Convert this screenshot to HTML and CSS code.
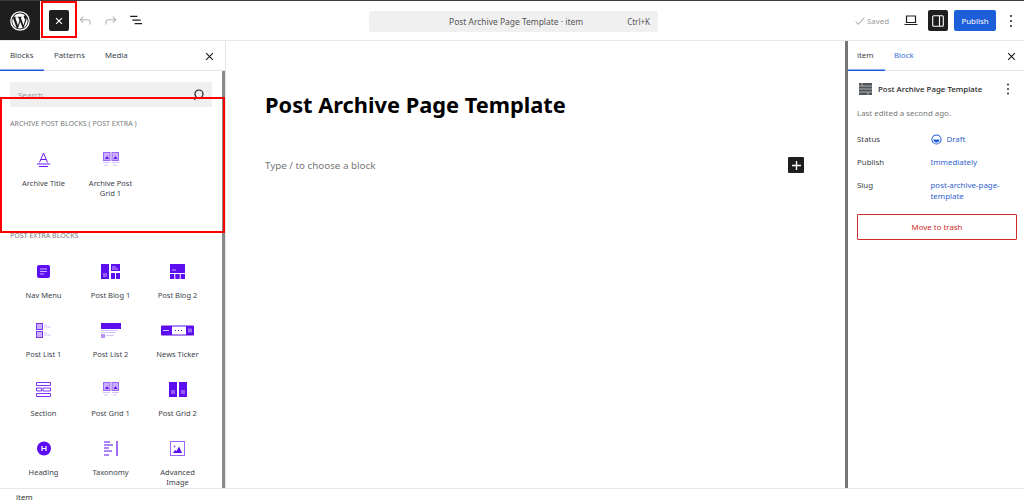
FILE: index.html
```html
<!DOCTYPE html>
<html lang="en">
<head>
<meta charset="utf-8">
<title>Post Archive Page Template</title>
<link rel="stylesheet" href="styles.css">
</head>
<body>
<div class="app">
  <header class="topbar">
    <div class="wp"><svg viewBox="0 0 24 24" width="22" height="22"><circle cx="12" cy="12" r="10" fill="none" stroke="#fff" stroke-width="1.4"/><path fill="#fff" d="M3.600 12a8.400 8.400 0 0 0 4.700 7.500L4.300 8.600A8.400 8.400 0 0 0 3.600 12zm14-.4c0-1-.4-1.800-.7-2.300-.4-.7-.8-1.200-.8-1.900 0-.7.600-1.400 1.400-1.400h.1A8.400 8.400 0 0 0 5 7.400h.5c.9 0 2.200-.1 2.200-.1.400 0 .5.600 0 .7 0 0-.4 0-.9.100l2.900 8.600 1.700-5.200-1.200-3.400c-.4 0-.8-.1-.8-.1-.4 0-.4-.7.100-.7 0 0 1.300.1 2.100.1.900 0 2.200-.1 2.200-.1.400 0 .5.600 0 .7 0 0-.4 0-.9.100l2.900 8.500.8-2.600c.3-1.100.6-1.900.6-2.500zM12.200 12.800l-2.400 7a8.400 8.400 0 0 0 5.200-.1l-.1-.1zm6.900-4.500c0 .3.100.6.100.9 0 .9-.2 1.900-.7 3.100l-2.600 7.400a8.400 8.400 0 0 0 3.200-11.400z"/></svg></div>
    <div class="tools">
      <button class="toggle"><svg viewBox="0 0 12 12" width="10" height="10"><path d="M2.500 2.500l7 7M9.500 2.500l-7 7" stroke="#fff" stroke-width="1.400"/></svg></button>
      <svg class="tool" viewBox="0 0 16 14" width="14" height="12"><path d="M6 2L2.500 5.500 6 9M3 5.500h7.500a3.500 3.500 0 0 1 3.500 3.500v2" fill="none" stroke="#b4b4b4" stroke-width="1.300"/></svg>
      <svg class="tool" viewBox="0 0 16 14" width="14" height="12"><path d="M10 2l3.500 3.500L10 9M13 5.500H5.500A3.500 3.500 0 0 0 2 9v2" fill="none" stroke="#b4b4b4" stroke-width="1.300"/></svg>
      <svg class="tool" viewBox="0 0 14 12" width="13" height="11"><path d="M0 1.500h8M2.500 5.500h9M5 9.500h8" stroke="#1e1e1e" stroke-width="1.400"/></svg>
    </div>
    <div class="command">
      <span class="command-title">Post Archive Page Template · item</span>
      <span class="command-key">Ctrl+K</span>
    </div>
    <div class="actions">
      <span class="saved"><svg viewBox="0 0 12 12" width="10" height="10"><path d="M1 6.500l3 3.500 7-8" fill="none" stroke="#8c8f94" stroke-width="1.100"/></svg>Saved</span>
      <svg class="laptop" viewBox="0 0 14 11" width="14" height="11"><path d="M2.500 1h9v6.500h-9zM.5 9.500h13" fill="none" stroke="#1e1e1e" stroke-width="1.200"/></svg>
      <button class="panel-toggle"><svg viewBox="0 0 12 12" width="12" height="12"><rect x=".7" y=".7" width="10.600" height="10.600" rx="1" fill="none" stroke="#fff" stroke-width="1.100"/><path d="M7.500 1v10" stroke="#fff" stroke-width="1.100"/></svg></button>
      <button class="publish">Publish</button>
      <svg class="dots" viewBox="0 0 4 14" width="4" height="14"><circle cx="2" cy="2" r="1" fill="#1e1e1e"/><circle cx="2" cy="7" r="1" fill="#1e1e1e"/><circle cx="2" cy="12" r="1" fill="#1e1e1e"/></svg>
    </div>
  </header>
  <div class="main">
    <aside class="inserter">
      <div class="tabs">
        <span class="tab active">Blocks</span>
        <span class="tab">Patterns</span>
        <span class="tab">Media</span>
        <svg class="close" viewBox="0 0 12 12" width="9" height="9"><path d="M1.500 1.500l9 9M10.500 1.500l-9 9" stroke="#1e1e1e" stroke-width="1.500"/></svg>
      </div>
      <div class="inserter-body">
        <div class="search"><span>Search</span><svg viewBox="0 0 12 12" width="12" height="12"><circle cx="6" cy="5" r="4" fill="none" stroke="#1e1e1e" stroke-width="1.200"/><path d="M3 8.500L1.500 11" stroke="#1e1e1e" stroke-width="1.200"/></svg></div>
        <h2 class="group-title first">ARCHIVE POST BLOCKS ( POST EXTRA )</h2>
        <div class="blocks featured">
          <div class="block"><svg viewBox="0 0 15 15" width="15" height="15"><path d="M3.500 10.500L7.500 1l4 9.500M5 7.500h5M1 12h13M3 14.500h9" fill="none" stroke="#6a17f5" stroke-width="1"/></svg><span>Archive Title</span></div>
          <div class="block"><svg viewBox="0 0 16 15" width="16" height="15"><use href="#grid1"/></svg><span>Archive Post<br>Grid 1</span></div>
        </div>
        <h2 class="group-title">POST EXTRA BLOCKS</h2>
        <div class="blocks">
          <div class="block"><svg viewBox="0 0 13 13" width="13" height="13"><rect width="13" height="13" rx="2" fill="#5c0ef0"/><path d="M3 4h7M3 6.500h7M3 9h4" stroke="#c9aefb" stroke-width="1"/></svg><span>Nav Menu</span></div>
          <div class="block"><svg viewBox="0 0 19 15" width="19" height="15"><path fill="#5c0ef0" d="M0 0h8v15H0zM10 0h9v7h-9zM10 9h4v6h-4zM15 9h4v6h-4z"/><path stroke="#c9aefb" d="M2 10h4M2 12h4M11 3h4M11 5h6"/></svg><span>Post Blog 1</span></div>
          <div class="block"><svg viewBox="0 0 15 15" width="15" height="15"><path fill="#5c0ef0" d="M0 0h15v9H0zM0 10h4.300v5H0zM5.300 10h4.400v5H5.300zM10.700 10H15v5h-4.300z"/><path stroke="#c9aefb" d="M2 6h4"/></svg><span>Post Blog 2</span></div>
          <div class="block"><svg viewBox="0 0 16 15" width="16" height="15"><rect x=".5" y=".5" width="6" height="6" fill="#c9aefb" stroke="#7a35f5"/><rect x=".5" y="8.500" width="6" height="6" fill="#c9aefb" stroke="#7a35f5"/><path stroke="#d8c4fc" stroke-width="1.200" d="M8 2h3M8 4h7M8 10h3M8 12h7"/></svg><span>Post List 1</span></div>
          <div class="block"><svg viewBox="0 0 20 15" width="20" height="15"><path fill="#5c0ef0" d="M0 0h20v6H0z"/><path stroke="#d8c4fc" stroke-width="1.200" d="M0 7.500h17M0 9.500h15"/><rect y="11" width="4" height="4" fill="#b794f9"/><path stroke="#d8c4fc" d="M5 12.500h8"/></svg><span>Post List 2</span></div>
          <div class="block"><svg viewBox="0 0 33 10" width="33" height="10"><rect width="33" height="10" rx="1" fill="#5c0ef0"/><rect x="11" y="1" width="14" height="8" fill="#fff"/><path stroke="#5c0ef0" stroke-dasharray="1 2" d="M14 5h8"/><path stroke="#d8c4fc" d="M2 5h6M28 3v4M30 3v4"/></svg><span>News Ticker</span></div>
          <div class="block"><svg viewBox="0 0 15 15" width="15" height="15"><path fill="none" stroke="#7a35f5" d="M.5.500h14v3H.5zM.5 6h5v3h-5zM7 6h7.500v3H7zM.5 11.500h14v3H.5z"/></svg><span>Section</span></div>
          <div class="block"><svg viewBox="0 0 16 15" width="16" height="15"><use href="#grid1"/></svg><span>Post Grid 1</span></div>
          <div class="block"><svg viewBox="0 0 18 15" width="18" height="15"><path fill="#5c0ef0" d="M0 0h8v15H0zM10 0h8v15h-8z"/><path stroke="#c9aefb" d="M2 9h4M2 11h4M12 9h4M12 11h4"/></svg><span>Post Grid 2</span></div>
          <div class="block"><svg viewBox="0 0 14 14" width="14" height="14"><circle cx="7" cy="7" r="7" fill="#5c0ef0"/><path d="M5 4.500v5M9 4.500v5M5 7h4" stroke="#fff" stroke-width="1.200"/></svg><span>Heading</span></div>
          <div class="block"><svg viewBox="0 0 14 15" width="14" height="15"><path stroke="#5c0ef0" stroke-width="1.200" d="M0 1h6M0 4h9M0 7h5M0 10h8M0 14h5M13 0v15"/></svg><span>Taxonomy</span></div>
          <div class="block"><svg viewBox="0 0 15 15" width="15" height="15"><rect x=".5" y=".5" width="14" height="14" fill="none" stroke="#9a66f7"/><path fill="#5c0ef0" d="M3 12l2-3 1.500 1L9 5.500l3 6.500z"/><circle cx="4.500" cy="5.500" r="1" fill="#9a66f7"/></svg><span>Advanced<br>Image</span></div>
        </div>
      </div>
    </aside>
    <main class="editor">
      <h1 class="post-title">Post Archive Page Template</h1>
      <div class="appender">
        <span>Type / to choose a block</span>
        <span class="plus"><svg viewBox="0 0 10 10" width="9" height="9"><path d="M5 0v10M0 5h10" stroke="#fff" stroke-width="1.500"/></svg></span>
      </div>
    </main>
    <aside class="sidebar">
      <div class="tabs side-tabs">
        <span class="tab active side-tab">item</span>
        <span class="tab block-tab">Block</span>
        <svg class="close" viewBox="0 0 12 12" width="9" height="9"><path d="M1.500 1.500l9 9M10.500 1.500l-9 9" stroke="#1e1e1e" stroke-width="1.500"/></svg>
      </div>
      <div class="side-body">
        <div class="doc-head">
          <svg viewBox="0 0 13 12" width="13" height="12"><path fill="#50555a" d="M0 0h13v12H0z"/><path stroke="#d8d8d8" stroke-width=".7" d="M0 3h13M0 6h13M0 9h13M3 0v3M9 9v3"/></svg>
          <strong>Post Archive Page Template</strong>
          <svg class="side-dots" viewBox="0 0 4 12" width="4" height="12"><circle cx="2" cy="1.500" r=".9" fill="#1e1e1e"/><circle cx="2" cy="6" r=".9" fill="#1e1e1e"/><circle cx="2" cy="10.500" r=".9" fill="#1e1e1e"/></svg>
        </div>
        <p class="edited">Last edited a second ago.</p>
        <dl class="meta">
          <dt>Status</dt>
          <dd class="status"><svg viewBox="0 0 12 12" width="11" height="11"><circle cx="6" cy="6" r="5" fill="none" stroke="#1d5fd8" stroke-width="1.100"/><path d="M2.800 6a3.200 3.200 0 0 0 6.400 0z" fill="#1d5fd8"/></svg>Draft</dd>
          <dt>Publish</dt>
          <dd>Immediately</dd>
          <dt>Slug</dt>
          <dd>post-archive-page-template</dd>
        </dl>
        <button class="trash">Move to trash</button>
      </div>
    </aside>
  </div>
  <footer class="breadcrumb">item</footer>
  <div class="mark mark-toggle"></div>
  <div class="mark mark-blocks"></div>
</div>
<svg class="defs" width="0" height="0"><defs><g id="grid1"><rect x=".5" y=".5" width="6.500" height="8" fill="#c9aefb" stroke="#9a66f7"/><rect x="9" y=".5" width="6.500" height="8" fill="#c9aefb" stroke="#9a66f7"/><path fill="#5c0ef0" d="M2 7l2-3 2 3zM10.500 7l2-3 2 3z"/><path stroke="#d8c4fc" stroke-width="1.200" d="M0 10.500h7M9 10.500h7M1 13h4M10 13h4"/></g></defs></svg>
</body>
</html>
```
FILE: styles.css
```css
* { box-sizing: border-box; }
html, body { margin: 0; height: 100%; }
body { font-family: "Noto Sans", "Open Sans", sans-serif; font-size: 7.900px; color: #3c434a; background: #fff; overflow: hidden; }
.app { position: relative; display: flex; flex-direction: column; height: 504px; border-top: 1px solid #3a3a3a; }
.defs { position: absolute; }
button { font: inherit; border: 0; padding: 0; }

.topbar { display: flex; align-items: center; height: 40px; flex: none; border-bottom: 1px solid #e8e8e8; }
.wp { width: 40px; height: 39px; background: #1e1e1e; display: flex; align-items: center; justify-content: center; }
.tools { display: flex; align-items: center; margin-left: 9px; }
.toggle { width: 20px; height: 21px; background: #1e1e1e; border-radius: 2px; display: flex; align-items: center; justify-content: center; }
.tool { margin-left: 12px; }
.tool:nth-child(2) { margin-left: 9px; }
.command { position: absolute; left: 369px; top: 10px; width: 289px; height: 21px; background: #f0f0f0; border-radius: 2px; display: flex; align-items: center; padding-right: 8px; color: #555; }
.command-title { flex: 1; text-align: center; padding-left: 36px; white-space: nowrap; font-size: 8.450px; }
.command-key { font-size: 8px; }
.actions { display: flex; align-items: center; margin-left: auto; padding-right: 11px; }
.saved { display: flex; align-items: center; gap: 2px; color: #9a9a9a; margin-right: 15px; }
.panel-toggle { width: 20px; height: 21px; margin-left: 10px; background: #1e1e1e; border-radius: 2px; display: flex; align-items: center; justify-content: center; }
.publish { width: 42px; height: 21px; margin-left: 6px; background: #1d5fd8; color: #fff; border-radius: 2px; }
.dots { margin-left: 13px; }

.main { display: flex; flex: 1; min-height: 0; }
.inserter { width: 225px; flex: none; display: flex; flex-direction: column; border-right: 3px solid #8a8a8a; box-shadow: 1px 0 0 #e4e4e4; }
.tabs { display: flex; align-items: stretch; height: 30px; flex: none; border-bottom: 1px solid #e4e4e4; position: relative; font-size: 7.800px; color: #3c434a; margin-right: -3px; background: #fff; }
.tab { display: flex; align-items: center; padding: 0 10px 2px; margin-bottom: -1px; }
.tab.active { box-shadow: inset 0 -1.500px 0 #1d5fd8; width: 44px; }
.close { position: absolute; right: 11px; top: 11px; }
.inserter-body { flex: 1; overflow: hidden; padding: 11px 10px 0; }
.search { height: 25px; background: #f0f0f0; display: flex; align-items: center; justify-content: space-between; padding: 0 7px 0 8px; color: #9a9a9a; }
.group-title { margin: 10px 0 0; font-size: 7.050px; font-weight: 400; color: #777; line-height: 12px; }
.blocks { display: grid; grid-template-columns: 67px 67px 67px; grid-auto-rows: 59px; margin: 19px 0 0; }
.blocks.featured { height: 81px; }
.featured + .group-title { margin-top: 0; }
.block { display: flex; flex-direction: column; align-items: center; padding-top: 4px; text-align: center; line-height: 10px; font-size: 7.500px; color: #3c434a; }
.block svg { height: 15px; flex: none; margin-bottom: 11px; }

.editor { flex: 1; min-width: 0; padding: 49px 41px 0 40px; }
.post-title { margin: 0; font-size: 21.800px; line-height: 30px; font-weight: 700; color: #000; }
.appender { display: flex; align-items: center; justify-content: space-between; margin-top: 37px; font-size: 9.800px; color: #777; }
.plus { width: 16px; height: 16px; background: #1e1e1e; border-radius: 1px; display: flex; align-items: center; justify-content: center; }

.sidebar { width: 179px; flex: none; border-left: 3px solid #777; display: flex; flex-direction: column; }
.side-tabs { margin-right: 0; }
.side-tabs .close { right: 8px; }
.tab.side-tab { padding-left: 9px; width: 37px; }
.block-tab { color: #3b6fd8; padding-left: 9px; }
.side-body { padding: 11px 8px 0 9px; }
.doc-head { display: flex; align-items: center; gap: 6px; height: 14px; color: #1e1e1e; padding-left: 2px; padding-right: 6px; }
.doc-head strong { font-weight: 500; flex: 1; white-space: nowrap; }
.edited { margin: 11px 0 0; color: #777; line-height: 12px; }
.meta { display: grid; grid-template-columns: 73.500px 1fr; margin: 15px 0 0; line-height: 11px; row-gap: 12px; }
.meta dt { color: #3c434a; }
.meta dd { margin: 0; color: #2f62d0; padding-right: 5px; }
.status { display: flex; align-items: center; gap: 5px; }
.trash { width: 160px; height: 26px; margin-top: 12px; background: #fff; color: #d02c2c; border: 1px solid #d02c2c; border-radius: 1px; display: block; }

.breadcrumb { height: 16px; flex: none; border-top: 1px solid #e8e8e8; padding: 2px 0 0 16px; line-height: 12px; color: #333; }

.mark { position: absolute; border: 2px solid #f00; pointer-events: none; }
.mark-toggle { left: 41px; top: 0; width: 36px; height: 37px; }
.mark-blocks { left: 0; top: 96px; width: 225px; height: 136px; }
```
